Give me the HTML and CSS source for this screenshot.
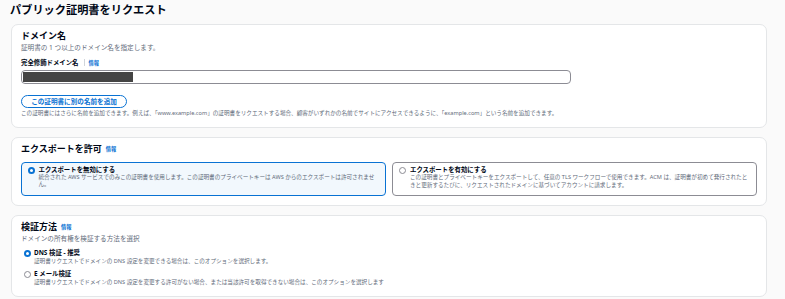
FILE: index.html
```html
<!DOCTYPE html>
<html lang="ja">
<head>
<meta charset="utf-8">
<title>パブリック証明書をリクエスト</title>
<link rel="stylesheet" href="styles.css">
</head>
<body>
<div class="page">
  <h1 class="page-title">パブリック証明書をリクエスト</h1>

  <section class="card">
    <h2 class="card-title">ドメイン名</h2>
    <p class="card-desc">証明書の 1 つ以上のドメイン名を指定します。</p>
    <div class="field-label">
      <span class="label-text">完全修飾ドメイン名</span>
      <span class="divider"></span>
      <a class="info">情報</a>
    </div>
    <div class="input">
      <span class="redacted"></span>
    </div>
    <button class="btn-outline">この証明書に別の名前を追加</button>
    <p class="help">この証明書にはさらに名前を追加できます。例えば、「www.example.com」の証明書をリクエストする場合、顧客がいずれかの名前でサイトにアクセスできるように、「example.com」という名前を追加できます。</p>
  </section>

  <section class="card">
    <h2 class="card-title">エクスポートを許可 <a class="info">情報</a></h2>
    <div class="tiles">
      <div class="tile selected">
        <span class="radio checked"></span>
        <div class="tile-body">
          <div class="opt-title">エクスポートを無効にする</div>
          <div class="opt-desc">統合された AWS サービスでのみこの証明書を使用します。この証明書のプライベートキーは AWS からのエクスポートは許可されません。</div>
        </div>
      </div>
      <div class="tile">
        <span class="radio"></span>
        <div class="tile-body">
          <div class="opt-title">エクスポートを有効にする</div>
          <div class="opt-desc">この証明書とプライベートキーをエクスポートして、任意の TLS ワークフローで使用できます。ACM は、証明書が初めて発行されたときと更新するたびに、リクエストされたドメインに基づいてアカウントに請求します。</div>
        </div>
      </div>
    </div>
  </section>

  <section class="card">
    <h2 class="card-title">検証方法 <a class="info">情報</a></h2>
    <p class="card-desc">ドメインの所有権を検証する方法を選択</p>
    <div class="options">
      <div class="option">
        <span class="radio checked"></span>
        <div class="tile-body">
          <div class="opt-title">DNS 検証 - 推奨</div>
          <div class="opt-desc">証明書リクエストでドメインの DNS 設定を変更できる場合は、このオプションを選択します。</div>
        </div>
      </div>
      <div class="option">
        <span class="radio"></span>
        <div class="tile-body">
          <div class="opt-title">E メール検証</div>
          <div class="opt-desc">証明書リクエストでドメインの DNS 設定を変更する許可がない場合、または当該許可を取得できない場合は、このオプションを選択します</div>
        </div>
      </div>
    </div>
  </section>
</div>
</body>
</html>
```

FILE: styles.css
```css
* { box-sizing: border-box; }
html, body {
  margin: 0;
  padding: 0;
  background: #fafafa;
  font-family: "Noto Sans", "Noto Sans CJK JP", sans-serif;
  color: #000716;
}
.page {
  padding: 0 18px 0 11px;
}
.page-title {
  margin: 0 0 0 -1px;
  padding: 1px 0 0 0;
  font-size: 11.2px;
  line-height: 18px;
  font-weight: 700;
  height: 24px;
}
.card {
  background: #fff;
  border: 1px solid #e4e6e8;
  border-radius: 7px;
  padding: 5px 9px 9px 9px;
  margin-bottom: 9px;
}
.card-title {
  margin: 0;
  font-size: 9px;
  line-height: 12px;
  font-weight: 700;
  display: flex;
  align-items: center;
  gap: 4px;
}
.card-desc {
  margin: 1px 0 0 0;
  font-size: 6.6px;
  line-height: 9px;
  color: #5f6b7a;
}
.info {
  color: #0972d3;
  font-size: 5.2px;
  font-weight: 700;
  line-height: 8px;
}
.field-label {
  display: flex;
  align-items: center;
  margin-top: 6px;
  height: 9px;
}
.label-text {
  font-size: 6.4px;
  font-weight: 700;
  line-height: 9px;
}
.divider {
  width: 1px;
  height: 7px;
  background: #d1d5db;
  margin: 0 4px 0 5px;
}
.input {
  margin-top: 3px;
  width: 550px;
  height: 14px;
  border: 1px solid #8c8c94;
  border-radius: 4px;
  padding: 1px;
  background: #fff;
}
.redacted {
  display: block;
  width: 110px;
  height: 10px;
  background: #444;
}
.btn-outline {
  display: block;
  margin-top: 11px;
  height: 13px;
  padding: 0 9px;
  border: 1.5px solid #0972d3;
  border-radius: 7px;
  background: #fff;
  color: #0972d3;
  font-family: inherit;
  font-size: 6.6px;
  font-weight: 700;
  line-height: 10px;
  width: 106px;
  white-space: nowrap;
}
.help {
  margin: 1px 0 0 0;
  font-size: 5.6px;
  line-height: 9px;
  color: #5f6b7a;
  white-space: nowrap;
}
.tiles {
  display: flex;
  gap: 6px;
  margin-top: 7px;
}
.tile {
  flex: 0 0 365px;
  display: flex;
  align-items: flex-start;
  gap: 4px;
  border: 1px solid #8c8c94;
  border-radius: 4px;
  padding: 3px 7px 4px 6px;
  height: 34px;
  background: #fff;
}
.tile.selected {
  border: 1.5px solid #0972d3;
  background: #f2f8fd;
  padding: 2.5px 7px 4px 5.5px;
}
.radio {
  flex: 0 0 auto;
  width: 7px;
  height: 7px;
  border-radius: 50%;
  border: 1px solid #8c8c94;
  background: #fff;
  margin-top: 1px;
}
.radio.checked {
  border: 2px solid #0972d3;
}
.tile-body { flex: 1; min-width: 0; }
.opt-title {
  font-size: 6.4px;
  line-height: 8px;
  font-weight: 700;
}
.opt-desc {
  font-size: 5.6px;
  line-height: 7.5px;
  color: #5f6b7a;
}
.options {
  margin-top: 6px;
  display: flex;
  flex-direction: column;
  gap: 4px;
  padding-left: 3px;
}
.option {
  display: flex;
  align-items: flex-start;
  gap: 3px;
}
.option .opt-desc { line-height: 9px; }
```
